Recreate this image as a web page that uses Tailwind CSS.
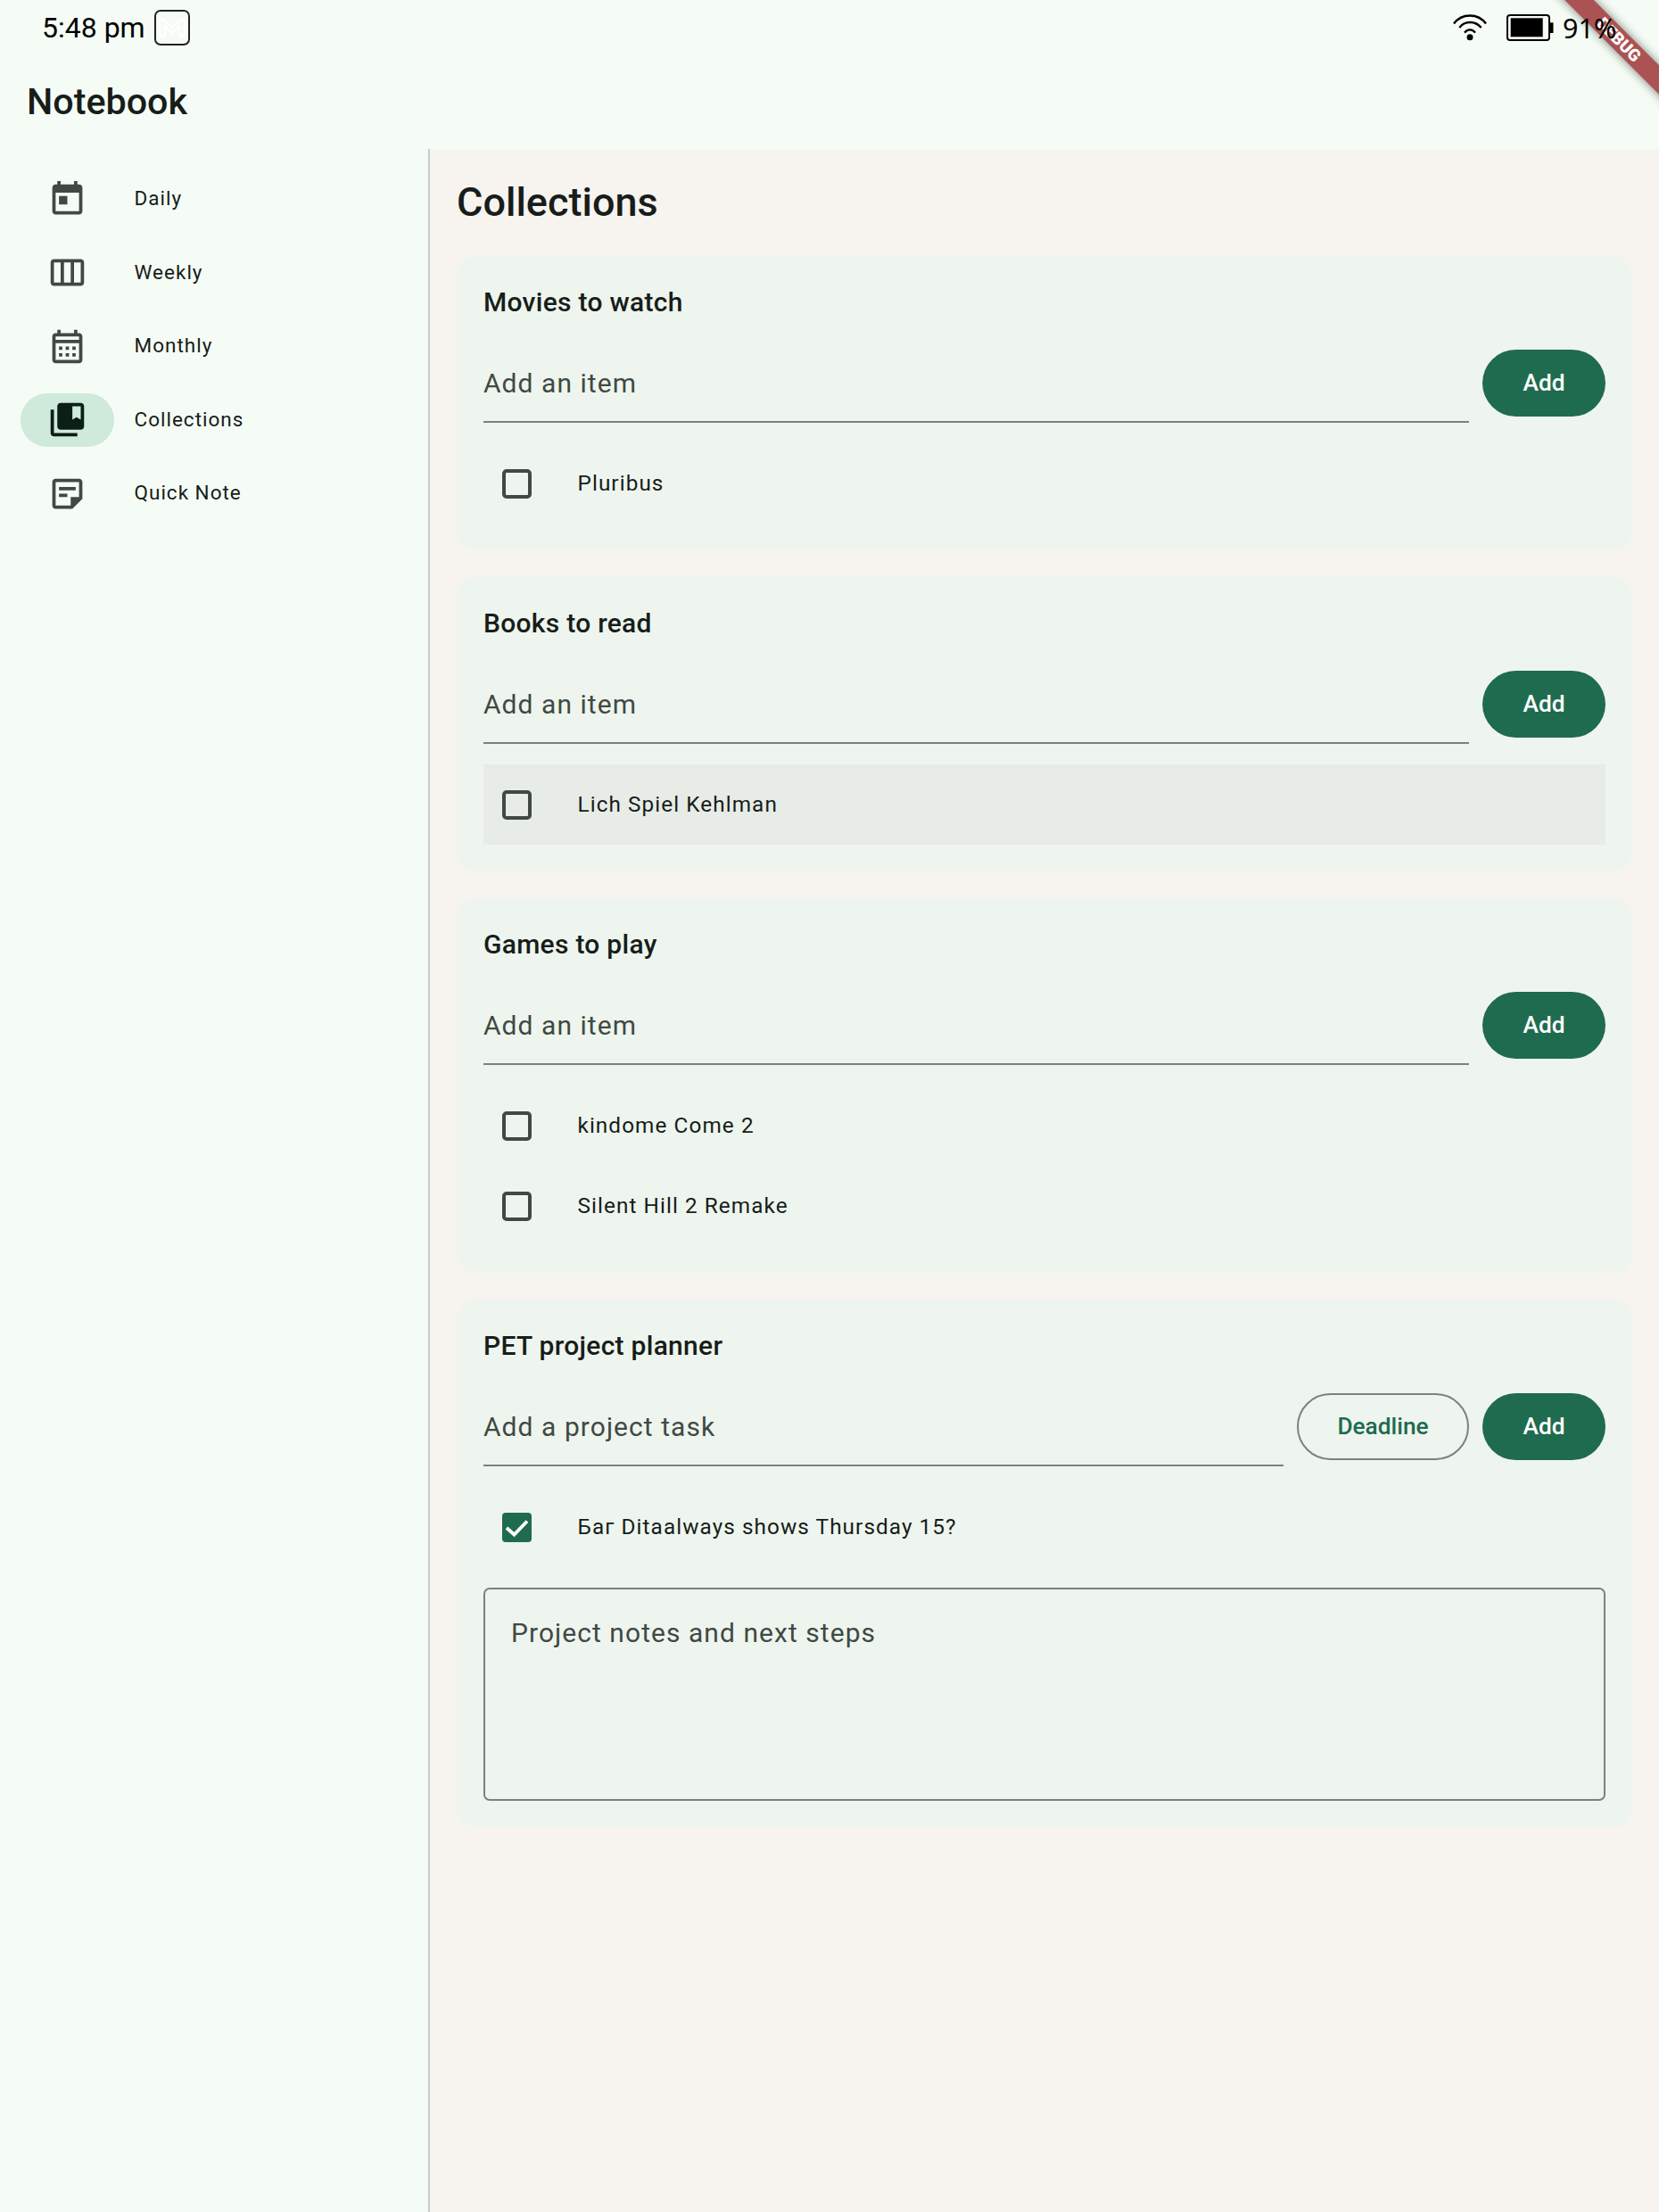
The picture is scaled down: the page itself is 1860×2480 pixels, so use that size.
<!DOCTYPE html>
<html lang="en">
  <head>
    <meta charset="UTF-8" />
    <title>Notebook</title>
    <script src="https://cdn.jsdelivr.net/npm/@tailwindcss/browser@4"></script>
  </head>
  <body class="relative h-[2480px] w-[1860px] overflow-hidden bg-[#f5fcf5] font-['Roboto',sans-serif] text-[#171d1a]">
    <!-- debug banner, the status bar is drawn over it -->
    <div class="absolute left-[1665px] top-[33px] h-[23px] w-[300px] rotate-45 bg-[#ab5252] text-center text-[19px] font-black leading-[23px] text-white shadow-[0_0_11px_rgba(0,0,0,0.5)]">DEBUG</div>

    <!-- status bar -->
    <div class="relative z-10 flex h-[62px] items-center pl-[47px] pr-[48px] text-black">
      <span class="text-[32px] font-[450] leading-none">5:48 pm</span>
      <div class="ml-[10px] flex h-[40px] w-[40px] items-center justify-center rounded-[7px] border-2 border-[#222]">
        <svg class="h-[20px] w-[30px]" viewBox="0 0 30 20" fill="none" stroke="#fff" stroke-width="2"><path d="M1 19V1h4l10 9 10-9h4v18h-6V9l-8 7-8-7v10z" /></svg>
      </div>
      <div class="ml-auto flex items-center">
        <svg class="h-[30px] w-[42px]" viewBox="0 0 42 30" fill="none" stroke="#000" stroke-width="2.400">
          <path d="M3 10.500C12-1.500 30-1.500 39 10.500" />
          <path d="M9.300 15C15 7 27 7 33.700 15" />
          <path d="M15 20.700C18 16.200 24 16.200 27 20.700" />
          <circle cx="21" cy="25.700" r="3.500" fill="#000" stroke="none" />
        </svg>
        <svg class="ml-[20px] h-[30px] w-[53px]" viewBox="0 0 53 30" fill="none">
          <rect x="1" y="1" width="47" height="28" rx="3" stroke="#000" stroke-width="2" />
          <rect x="4.700" y="4.300" width="36" height="21" fill="#000" />
          <rect x="49" y="9.300" width="3.500" height="11.700" fill="#000" />
        </svg>
        <span class="ml-[10px] w-[60px] whitespace-nowrap font-['Noto_Sans',sans-serif] text-[30.500px] leading-none">91%</span>
      </div>
    </div>

    <h1 class="flex h-[105px] items-start pl-[30px] pt-[28px] text-[41.250px] font-[460] leading-[48px]">Notebook</h1>

    <div class="flex h-[2313px]">
      <!-- sidebar -->
      <nav class="flex w-[480px] flex-col pt-[15px]">
        <a class="flex h-[82.500px] items-center tracking-[1px]">
          <span class="ml-[23px] flex h-[60px] w-[105px] items-center justify-center">
            <svg class="h-[45px] w-[45px] fill-[#404943]" viewBox="0 0 24 24"><path d="M19 3h-1V1h-2v2H8V1H6v2H5c-1.110 0-1.990.9-1.990 2L3 19c0 1.100.89 2 2 2h14c1.100 0 2-.9 2-2V5c0-1.100-.9-2-2-2zm0 16H5V8h14v11zM7 10h5v5H7z" /></svg>
          </span>
          <span class="ml-[22.500px] text-[22.500px] font-[450]">Daily</span>
        </a>
        <a class="flex h-[82.500px] items-center tracking-[1px]">
          <span class="ml-[23px] flex h-[60px] w-[105px] items-center justify-center">
            <svg class="h-[45px] w-[45px] fill-[#404943]" viewBox="0 0 24 24"><path d="M20 4H4c-1.100 0-2 .9-2 2v12c0 1.100.9 2 2 2h16c1.100 0 2-.9 2-2V6c0-1.100-.9-2-2-2zM8 18H4V6h4v12zm6 0h-4V6h4v12zm6 0h-4V6h4v12z" /></svg>
          </span>
          <span class="ml-[22.500px] text-[22.500px] font-[450]">Weekly</span>
        </a>
        <a class="flex h-[82.500px] items-center tracking-[1px]">
          <span class="ml-[23px] flex h-[60px] w-[105px] items-center justify-center">
            <svg class="h-[45px] w-[45px] fill-[#404943]" viewBox="0 0 24 24"><path d="M19 4h-1V2h-2v2H8V2H6v2H5c-1.100 0-2 .9-2 2v14c0 1.100.9 2 2 2h14c1.100 0 2-.9 2-2V6c0-1.100-.9-2-2-2zm0 16H5V10h14v10zm0-12H5V6h14v2zM9 14H7v-2h2v2zm4 0h-2v-2h2v2zm4 0h-2v-2h2v2zm-8 4H7v-2h2v2zm4 0h-2v-2h2v2zm4 0h-2v-2h2v2z" /></svg>
          </span>
          <span class="ml-[22.500px] text-[22.500px] font-[450]">Monthly</span>
        </a>
        <a class="flex h-[82.500px] items-center tracking-[1px]">
          <span class="ml-[23px] flex h-[60px] w-[105px] items-center justify-center rounded-full bg-[#cfe9da]">
            <svg class="h-[45px] w-[45px] fill-[#0b1f16]" viewBox="0 0 24 24"><path d="M4 6H2v14c0 1.100.9 2 2 2h14v-2H4V6zM20 2H8c-1.100 0-2 .9-2 2v12c0 1.100.9 2 2 2h12c1.100 0 2-.9 2-2V4c0-1.100-.9-2-2-2zm0 10l-2.500-1.500L15 12V4h5v8z" /></svg>
          </span>
          <span class="ml-[22.500px] text-[22.500px] font-[450]">Collections</span>
        </a>
        <a class="flex h-[82.500px] items-center tracking-[1px]">
          <span class="ml-[23px] flex h-[60px] w-[105px] items-center justify-center">
            <svg class="h-[45px] w-[45px] fill-[#404943]" viewBox="0 0 24 24"><path d="M19 5v9l-5 0 0 5H5V5h14M19 3H5C3.900 3 3 3.900 3 5v14c0 1.100.9 2 2 2h10l6-6V5c0-1.100-.9-2-2-2zM12 14H7v-2h5v2zM17 10H7V8h10v2z" /></svg>
          </span>
          <span class="ml-[22.500px] text-[22.500px] font-[450]">Quick Note</span>
        </a>
      </nav>

      <!-- content -->
      <main class="flex-1 border-l-2 border-[#c8ccc6] bg-[#f7f3ef] px-[30px]">
        <h2 class="h-[120px] pt-[30px] text-[45px] font-[460] leading-[60px]">Collections</h2>
        <div class="flex flex-col gap-[30px]">
          <section class="rounded-[22px] bg-[#eef5ee] p-[30px]">
            <h3 class="pt-[1px] text-[30px] font-[460] leading-[42px] tracking-[0.280px]">Movies to watch</h3>
            <div class="mt-[29px] flex gap-[15px]">
              <div class="flex h-[85px] flex-1 items-center border-b-2 border-[#7a827c] pb-[3px] text-[30px] font-[450] tracking-[1.050px] text-[#404943]">Add an item</div>
              <button class="mt-[3px] h-[75px] w-[138px] rounded-full bg-[#1f6b4f] pt-[1px] text-[26.250px] font-[460] text-white">Add</button>
            </div>
            <ul class="mt-[23px]">
              <li class="flex h-[90px] items-center pl-[21px] text-[24.375px] font-[450] tracking-[1.050px]">
                <span class="h-[33px] w-[33px] rounded-[5px] border-4 border-[#404943]"></span>
                <span class="ml-[51.500px]">Pluribus</span>
              </li>
            </ul>
          </section>

          <section class="rounded-[22px] bg-[#eef5ee] p-[30px]">
            <h3 class="pt-[1px] text-[30px] font-[460] leading-[42px] tracking-[0.280px]">Books to read</h3>
            <div class="mt-[29px] flex gap-[15px]">
              <div class="flex h-[85px] flex-1 items-center border-b-2 border-[#7a827c] pb-[3px] text-[30px] font-[450] tracking-[1.050px] text-[#404943]">Add an item</div>
              <button class="mt-[3px] h-[75px] w-[138px] rounded-full bg-[#1f6b4f] pt-[1px] text-[26.250px] font-[460] text-white">Add</button>
            </div>
            <ul class="mt-[23px]">
              <li class="flex h-[90px] items-center bg-[#e7ece6] pl-[21px] text-[24.375px] font-[450] tracking-[1.050px]">
                <span class="h-[33px] w-[33px] rounded-[5px] border-4 border-[#404943]"></span>
                <span class="ml-[51.500px]">Lich Spiel Kehlman</span>
              </li>
            </ul>
          </section>

          <section class="rounded-[22px] bg-[#eef5ee] p-[30px]">
            <h3 class="pt-[1px] text-[30px] font-[460] leading-[42px] tracking-[0.280px]">Games to play</h3>
            <div class="mt-[29px] flex gap-[15px]">
              <div class="flex h-[85px] flex-1 items-center border-b-2 border-[#7a827c] pb-[3px] text-[30px] font-[450] tracking-[1.050px] text-[#404943]">Add an item</div>
              <button class="mt-[3px] h-[75px] w-[138px] rounded-full bg-[#1f6b4f] pt-[1px] text-[26.250px] font-[460] text-white">Add</button>
            </div>
            <ul class="mt-[23px]">
              <li class="flex h-[90px] items-center pl-[21px] text-[24.375px] font-[450] tracking-[1.050px]">
                <span class="h-[33px] w-[33px] rounded-[5px] border-4 border-[#404943]"></span>
                <span class="ml-[51.500px]">kindome Come 2</span>
              </li>
              <li class="flex h-[90px] items-center pl-[21px] text-[24.375px] font-[450] tracking-[1.050px]">
                <span class="h-[33px] w-[33px] rounded-[5px] border-4 border-[#404943]"></span>
                <span class="ml-[51.500px]">Silent Hill 2 Remake</span>
              </li>
            </ul>
          </section>

          <section class="rounded-[22px] bg-[#eef5ee] p-[30px]">
            <h3 class="pt-[1px] text-[30px] font-[460] leading-[42px] tracking-[0.280px]">PET project planner</h3>
            <div class="mt-[29px] flex gap-[15px]">
              <div class="flex h-[85px] flex-1 items-center border-b-2 border-[#7a827c] pb-[3px] text-[30px] font-[450] tracking-[1.050px] text-[#404943]">Add a project task</div>
              <button class="mt-[3px] h-[75px] w-[193px] rounded-full border-2 border-[#7a827c] text-[26.250px] font-[460] text-[#1f6b4f]">Deadline</button>
              <button class="mt-[3px] h-[75px] w-[138px] rounded-full bg-[#1f6b4f] pt-[1px] text-[26.250px] font-[460] text-white">Add</button>
            </div>
            <ul class="mt-[23px]">
              <li class="flex h-[90px] items-center pl-[21px] text-[24.375px] font-[450] tracking-[1.050px]">
                <span class="flex h-[33px] w-[33px] items-center justify-center rounded-[4px] bg-[#1f6b4f]">
                  <svg class="h-[33px] w-[33px]" viewBox="0 0 33 33" fill="none" stroke="#fff" stroke-width="3.800"><path d="M5 17l8.500 7.500L28 9.500" /></svg>
                </span>
                <span class="ml-[51.500px]">Баг Ditaalways shows Thursday 15?</span>
              </li>
            </ul>
            <div class="mt-[23px] h-[239px] rounded-[7px] border-2 border-[#7a827c] px-[29px] pt-[29px] text-[30px] font-[450] leading-[40px] tracking-[1.050px] text-[#404943]">Project notes and next steps</div>
          </section>
        </div>
      </main>
    </div>
  </body>
</html>
